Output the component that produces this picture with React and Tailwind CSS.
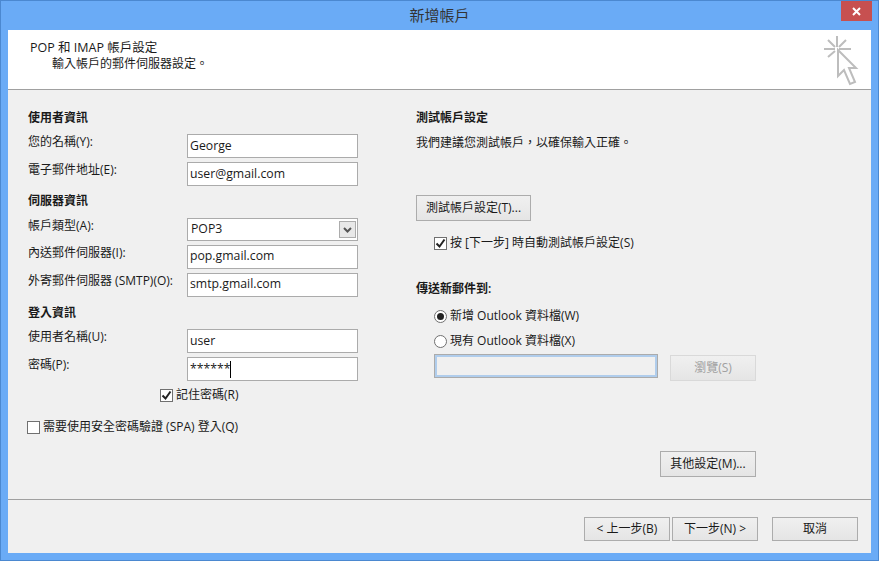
const font = { fontFamily: '"Open Sans", "Noto Sans CJK TC", sans-serif' };

const CursorIcon = () => (
  <svg width="36" height="50" viewBox="0 0 36 50" fill="none" stroke="#bdbdbd" strokeWidth="2">
    <path d="M13 0v11M0 13h11M15 13h12M4 4l7 7M22 4l-7 7M4 21l7-6" />
    <path d="M14 14v26l6-6 6 14 5-2-6-14h7z" fill="#fff" />
  </svg>
);

const Check = () => (
  <svg width="11" height="11" viewBox="0 0 11 11" fill="none" stroke="#222" strokeWidth="2">
    <path d="M1.5 5.5l3 3 5-7" />
  </svg>
);

const Checkbox = ({ checked, label, className = "" }) => (
  <div className={`flex items-center gap-[3px] ${className}`}>
    <span className="flex h-[13px] w-[13px] items-center justify-center border border-[#707070] bg-white">
      {checked && <Check />}
    </span>
    <span>{label}</span>
  </div>
);

const Radio = ({ checked, label }) => (
  <div className="flex items-center gap-[3px]">
    <span className="flex h-[13px] w-[13px] items-center justify-center rounded-full border border-[#707070] bg-white">
      {checked && <span className="h-[7px] w-[7px] rounded-full bg-[#222]" />}
    </span>
    <span>{label}</span>
  </div>
);

const Input = ({ value, caret, className = "" }) => (
  <div className={`flex h-[24px] w-[171px] items-center border border-[#ababab] bg-white pl-[2px] text-[12.25px] ${className}`}>
    <span>{value}</span>
    {caret && <span className="h-[17px] w-px bg-black" />}
  </div>
);

const Field = ({ label, children, className = "" }) => (
  <div className={`flex ${className}`}>
    <span className="w-[159px] shrink-0 leading-[15px]">{label}</span>
    {children}
  </div>
);

const Button = ({ children, className = "" }) => (
  <div className={`flex items-center justify-center border border-[#acacac] bg-gradient-to-b from-[#f0f0f0] to-[#e5e5e5] ${className}`}>
    {children}
  </div>
);

export default function App() {
  return (
    <div style={font} className="flex h-[561px] w-[879px] flex-col border border-[#4b88d0] bg-[#6aabf6] text-[12px] text-[#1a1a1a]">
      {/* Title bar */}
      <div className="flex h-[29px] shrink-0 items-start">
        <div className="w-[37px] shrink-0" />
        <div className="flex-1 pt-[4px] text-center text-[15px] leading-[20px] text-[#333]">新增帳戶</div>
        <div className="mr-[6px] flex h-[20px] w-[31px] items-center justify-center bg-[#c75050]">
          <svg width="9" height="9" viewBox="0 0 9 9" stroke="#fff" strokeWidth="2"><path d="M1 1l7 7M8 1l-7 7" /></svg>
        </div>
      </div>

      <div className="mx-[7px] flex flex-1 flex-col">
        {/* Header */}
        <div className="flex h-[60px] shrink-0 justify-between border-b border-[#a0a0a0] bg-white pl-[22px] pr-[11px]">
          <div className="pt-[10px] leading-[16px]">
            <div className="text-[12.5px]">POP 和 IMAP 帳戶設定</div>
            <div className="pl-[22px]">輸入帳戶的郵件伺服器設定。</div>
          </div>
          <div className="pt-[6px]"><CursorIcon /></div>
        </div>

        {/* Body */}
        <div className="flex h-[410px] shrink-0 border-b border-[#a0a0a0] bg-[#f0f0f0]">
          <div className="w-[408px] pl-[20px] pt-[20px]">
            <div className="font-semibold leading-[16px]">使用者資訊</div>
            <Field label="您的名稱(Y):" className="mt-[8px]"><Input value="George" /></Field>
            <Field label="電子郵件地址(E):" className="mt-[4px]"><Input value="user@gmail.com" /></Field>
            <div className="mt-[7px] font-semibold leading-[16px]">伺服器資訊</div>
            <Field label="帳戶類型(A):" className="mt-[9px]">
              <div className="flex h-[23px] w-[171px] items-center justify-between border border-[#ababab] bg-white pl-[3px] pr-[1px] text-[12.25px]">
                <span>POP3</span>
                <span className="flex h-[17px] w-[17px] items-center justify-center border border-[#acacac] bg-[#e8e8e8]">
                  <svg width="9" height="6" viewBox="0 0 9 6" fill="none" stroke="#555" strokeWidth="2"><path d="M1 1l3.500 3.500L8 1" /></svg>
                </span>
              </div>
            </Field>
            <Field label="內送郵件伺服器(I):" className="mt-[4px]"><Input value="pop.gmail.com" className="pb-px" /></Field>
            <Field label="外寄郵件伺服器 (SMTP)(O):" className="mt-[4px]"><Input value="smtp.gmail.com" className="pb-px" /></Field>
            <div className="mt-[8px] font-semibold leading-[16px]">登入資訊</div>
            <Field label="使用者名稱(U):" className="mt-[8px]"><Input value="user" /></Field>
            <Field label="密碼(P):" className="mt-[4px]"><Input value="******" caret /></Field>
            <Checkbox checked label="記住密碼(R)" className="ml-[132px] mt-[5px]" />
            <Checkbox label="需要使用安全密碼驗證 (SPA) 登入(Q)" className="-ml-px mt-[14px]" />
          </div>

          <div className="flex-1 pt-[20px]">
            <div className="font-semibold leading-[16px]">測試帳戶設定</div>
            <div className="mt-[9px] leading-[16px]">我們建議您測試帳戶，以確保輸入正確。</div>
            <Button className="mt-[44px] h-[26px] w-[115px]">測試帳戶設定(T)...</Button>
            <Checkbox checked label="按 [下一步] 時自動測試帳戶設定(S)" className="ml-[18px] mt-[13px]" />
            <div className="mt-[29px] font-semibold leading-[16px]">傳送新郵件到:</div>
            <div className="ml-[18px] mt-[10px] flex flex-col gap-[7px]">
              <Radio checked label="新增 Outlook 資料檔(W)" />
              <Radio label="現有 Outlook 資料檔(X)" />
            </div>
            <div className="ml-[18px] mt-[4px] flex items-start gap-[12px]">
              <div className="h-[24px] w-[224px] border border-[#ababab]">
                <div className="h-full border-2 border-[#b0cdec] bg-[#f0f0f0]" />
              </div>
              <Button className="mt-px h-[26px] w-[86px] border-[#d9d9d9] text-[#a0a0a0]">瀏覽(S)</Button>
            </div>
            <Button className="ml-[244px] mt-[70px] h-[26px] w-[96px]">其他設定(M)...</Button>
          </div>
        </div>

        {/* Footer */}
        <div className="flex flex-1 items-start bg-[#f0f0f0] pl-[576px] pt-[17px]">
          <Button className="h-[24px] w-[86px]">&lt; 上一步(B)</Button>
          <Button className="ml-[2px] h-[24px] w-[86px] border-[#3c8ff0]">下一步(N) &gt;</Button>
          <Button className="ml-[14px] h-[24px] w-[86px]">取消</Button>
        </div>
      </div>
      <div className="h-[7px] shrink-0" />
    </div>
  );
}
